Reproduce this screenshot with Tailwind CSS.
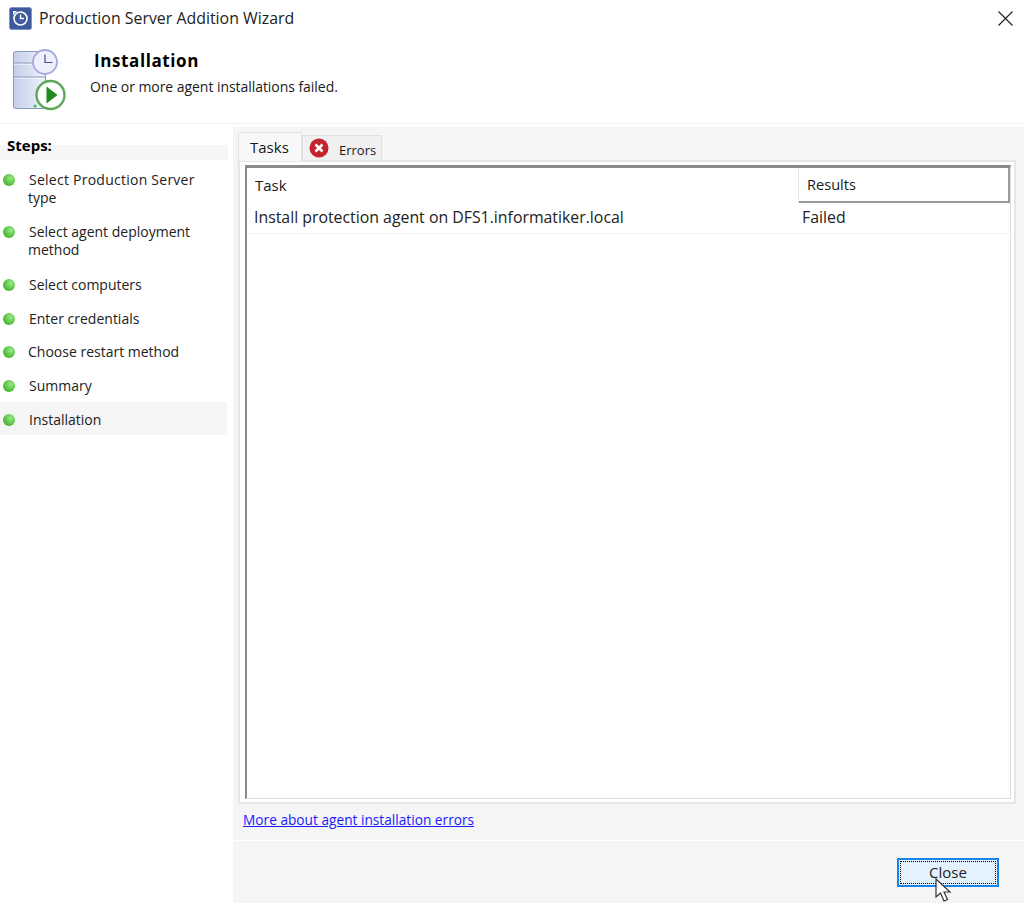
<!DOCTYPE html>
<html lang="en">
<head>
    <meta charset="UTF-8">
    <title>Production Server Addition Wizard</title>
    <script src="https://cdn.jsdelivr.net/npm/@tailwindcss/browser@4"></script>
</head>
<body class="bg-white">
<div class="w-[1024px] h-[903px] flex flex-col overflow-hidden text-[#1a1a1a] font-['Open_Sans','Noto_Sans',sans-serif] text-[14px]">

    <!-- title bar -->
    <div class="h-9 flex items-center pl-[9px] pr-[11px] shrink-0">
        <svg class="w-[23px] h-[23px]" viewBox="0 0 23 23">
            <rect x="0.5" y="0.5" width="22" height="22" rx="2" fill="#3f5a9c" stroke="#7f93c4"/>
            <circle cx="11.5" cy="11.5" r="6.5" fill="none" stroke="#fff" stroke-width="1.6"/>
            <path d="M11.5 7.5V11.5H15" fill="none" stroke="#fff" stroke-width="1.4"/>
            <path d="M4 4L8 4L4 8Z" fill="#fff"/>
        </svg>
        <span class="ml-[7px] relative top-px text-[15.9px] text-[#222]">Production Server Addition Wizard</span>
        <svg class="ml-auto w-[15px] h-[15px]" viewBox="0 0 15 15"><path d="M0.5 0.5L14.5 14.5M14.5 0.5L0.5 14.5" stroke="#222" stroke-width="1.2"/></svg>
    </div>

    <!-- header -->
    <div class="h-[88px] flex shrink-0 pl-[13px] pt-[13px] border-b border-[#f0f0f0]">
        <svg class="w-[54px] h-[62px] shrink-0" viewBox="0 0 54 62">
            <defs>
                <linearGradient id="srv" x1="0" y1="0" x2="1" y2="0">
                    <stop offset="0" stop-color="#c3cee8"/>
                    <stop offset="1" stop-color="#eef2fb"/>
                </linearGradient>
            </defs>
            <rect x="0.5" y="2.5" width="32" height="57" rx="2" fill="url(#srv)" stroke="#8c9ac0"/>
            <path d="M1 15H32M1 29H32" stroke="#fff" stroke-width="1"/>
            <path d="M1 14H32M1 28H32" stroke="#8c9ac0" stroke-width="1"/>
            <circle cx="32" cy="13" r="12" fill="#eef0fb" stroke="#a5a8e0" stroke-width="1.8"/>
            <path d="M32 5.5V13.5H39.5" fill="none" stroke="#4a4f8c" stroke-width="1.2"/>
            <circle cx="37.5" cy="46" r="14" fill="#fff" stroke="#5da85a" stroke-width="2.4"/>
            <path d="M33.5 37.5L44.5 46L33.5 54.5Z" fill="#1f8a1f"/>
            <circle cx="22" cy="57" r="1.5" fill="#4cc04c"/>
        </svg>
        <div class="ml-[23px]">
            <div class="pl-[4px] text-[17px] leading-[24px] font-bold tracking-[0.6px] text-black">Installation</div>
            <div class="mt-[2px] text-[14px] leading-[24px] tracking-[-0.05px]">One or more agent installations failed.</div>
        </div>
    </div>

    <div class="flex-1 flex pt-[3px] min-h-0">
        <!-- steps -->
        <div class="w-[233px] shrink-0">
            <div class="w-[228px] h-[33px] pl-[7px] pt-[8px] font-bold text-[15px] leading-[20px] bg-gradient-to-b from-white from-[55%] to-[#f5f6f5] to-[55%] text-black">Steps:</div>
            <div class="w-[227px] pt-[11px] text-[14px] leading-[18px] text-[#222]">
                <div class="flex h-[52px]"><span class="w-[29px] shrink-0 pl-[3px] pt-[3px]"><i class="block w-3 h-3 rounded-full bg-[radial-gradient(circle_at_65%_35%,#9be88a,#46b82f_70%)]"></i></span><span><span class="tracking-[0.25px]">Select Production Server</span><br><span class="-ml-px">type</span></span></div>
                <div class="flex h-[53px]"><span class="w-[29px] shrink-0 pl-[3px] pt-[3px]"><i class="block w-3 h-3 rounded-full bg-[radial-gradient(circle_at_65%_35%,#9be88a,#46b82f_70%)]"></i></span><span>Select agent deployment<br><span class="-ml-px">method</span></span></div>
                <div class="flex h-[34px]"><span class="w-[29px] shrink-0 pl-[3px] pt-[3px]"><i class="block w-3 h-3 rounded-full bg-[radial-gradient(circle_at_65%_35%,#9be88a,#46b82f_70%)]"></i></span><span>Select computers</span></div>
                <div class="flex h-[33px]"><span class="w-[29px] shrink-0 pl-[3px] pt-[3px]"><i class="block w-3 h-3 rounded-full bg-[radial-gradient(circle_at_65%_35%,#9be88a,#46b82f_70%)]"></i></span><span>Enter credentials</span></div>
                <div class="flex h-[34px]"><span class="w-[28px] shrink-0 pl-[3px] pt-[3px]"><i class="block w-3 h-3 rounded-full bg-[radial-gradient(circle_at_65%_35%,#9be88a,#46b82f_70%)]"></i></span><span>Choose restart method</span></div>
                <div class="flex h-[25px]"><span class="w-[29px] shrink-0 pl-[3px] pt-[3px]"><i class="block w-3 h-3 rounded-full bg-[radial-gradient(circle_at_65%_35%,#9be88a,#46b82f_70%)]"></i></span><span>Summary</span></div>
                <div class="flex h-[33px] pt-[9px] bg-[#f5f5f5]"><span class="w-[29px] shrink-0 pl-[3px] pt-[3px]"><i class="block w-3 h-3 rounded-full bg-[radial-gradient(circle_at_65%_35%,#9be88a,#46b82f_70%)]"></i></span><span>Installation</span></div>
            </div>
        </div>

        <!-- main panel -->
        <div class="flex-1 bg-[#f5f5f5] flex flex-col min-w-0">
            <div class="pl-[5px] pr-2 pt-[5px] flex-1 flex flex-col min-h-0">
                <div class="flex items-end h-[28px] shrink-0">
                    <div class="relative z-10 w-[64px] h-[29px] -mb-px bg-[#f8f8f8] border border-b-0 border-[#e4e4e4] pl-[11px] leading-[29px] text-[15px]">Tasks</div>
                    <div class="flex items-center h-[25px] w-[80px] bg-[#f0f0f0] border border-b-0 border-[#e0e0e0] pl-[6px] text-[13px]">
                        <svg class="w-5 h-5 shrink-0" viewBox="0 0 20 20">
                            <circle cx="10" cy="10" r="9.5" fill="#c4232d"/>
                            <path d="M6.5 6.5L13.5 13.5M13.5 6.5L6.5 13.5" stroke="#fff" stroke-width="2.6"/>
                        </svg>
                        <span class="ml-[10px] relative top-[3px]">Errors</span>
                    </div>
                </div>
                <div class="h-[644px] shrink-0 bg-white border-2 border-[#e6e6e6] pl-[5px] pr-[3px] py-[3px]">
                    <div class="h-full bg-white border-l-2 border-t-[3px] border-[#8a8a8a] border-r border-r-[#dcdcdc] border-b border-b-[#dcdcdc] flex flex-col">
                        <div class="h-[35px] flex shrink-0">
                            <div class="w-[552px] pl-2 leading-[34px] text-[15px] border-r border-[#e6e6e6]">Task</div>
                            <div class="flex-1 pl-2 leading-[32px] text-[14.6px] border-b-2 border-r-2 border-[#9a9a9a]">Results</div>
                        </div>
                        <div class="h-[31px] flex items-center pb-[1px] border-b border-[#f0f0f0] text-[15.85px] text-[#222]">
                            <div class="w-[555px] pl-[7px]">Install protection agent on DFS1.informatiker.local</div>
                            <div>Failed</div>
                        </div>
                    </div>
                </div>
                <div class="h-[35px] shrink-0 pl-[5px] pt-[5px]">
                    <a href="#" class="text-[13.7px] leading-[20px] text-[#1a1aff] underline">More about agent installation errors</a>
                </div>
            </div>
            <div class="h-[63px] shrink-0 border-t border-white flex justify-end items-start pt-[17px] pr-[25px] relative">
                <button class="relative w-[102px] h-[29px] bg-[#e4f2fd] border-2 border-[#1784e6] text-[15px] text-[#222] outline-1 outline-dotted outline-black -outline-offset-[4px]">Close</button>
                <svg class="absolute left-[702px] top-[37px] w-[19px] h-[25px]" viewBox="0 0 19 25">
                    <path d="M1 1V19L5.5 15L9 23L12.5 21.5L9 14H15Z" fill="#fff" stroke="#333" stroke-width="1.2"/>
                </svg>
            </div>
        </div>
    </div>
</div>
</body>
</html>
